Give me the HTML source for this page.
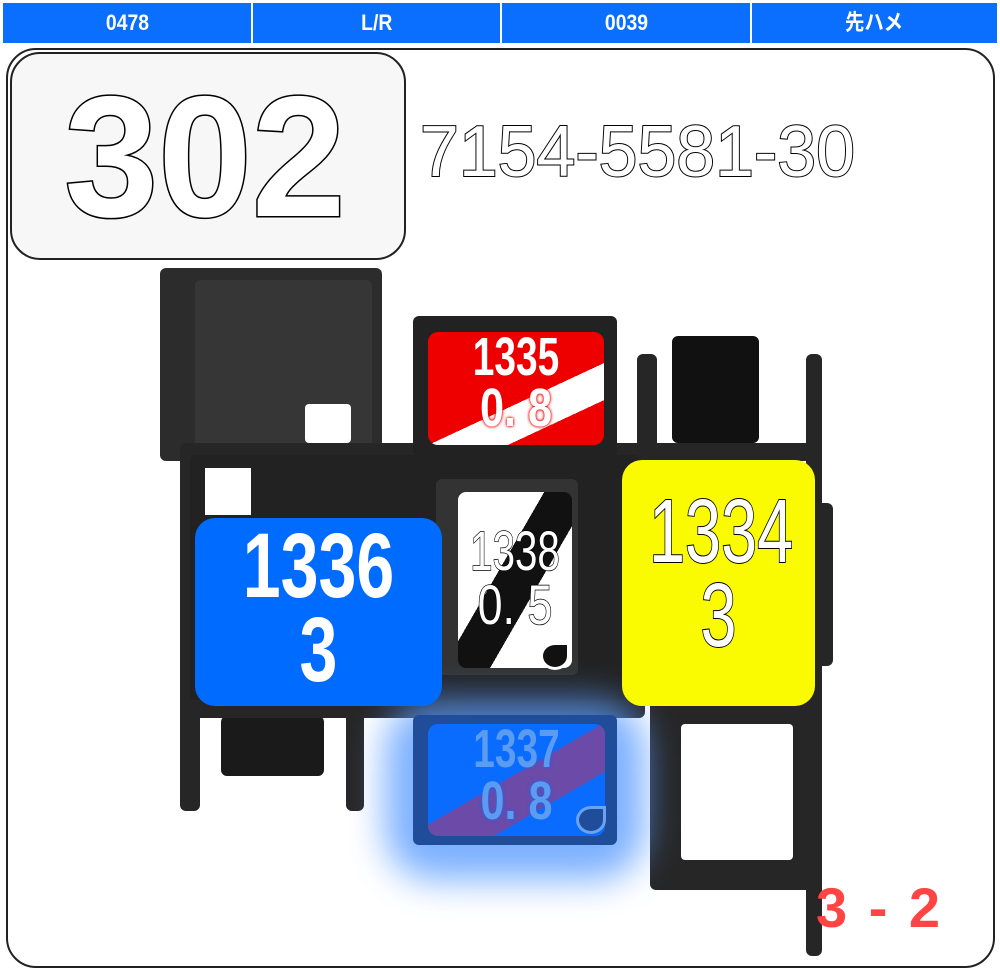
<!DOCTYPE html>
<html><head><meta charset="utf-8"><style>
*{margin:0;padding:0;box-sizing:border-box}
body{width:1000px;height:973px;background:#fff;position:relative;overflow:hidden;font-family:"Liberation Sans","Noto Sans CJK JP",sans-serif}
.a{position:absolute}
.hd{top:3px;height:40px;background:#0a6fff;color:#fff;font-weight:bold;font-size:22px;text-align:center;line-height:40px}
.hd span{display:inline-block;transform:scaleX(.88)}
.d{position:absolute;background:#262626;border-radius:6px}
.ol{color:#fff;-webkit-text-stroke:2px #000;paint-order:stroke fill}
.lab{position:absolute;text-align:center;line-height:1;white-space:nowrap}
.lab div{transform-origin:center}
</style></head><body>
<div class="a hd" style="left:3px;width:248px"><span>0478</span></div>
<div class="a hd" style="left:253px;width:247px"><span>L/R</span></div>
<div class="a hd" style="left:502px;width:248px"><span>0039</span></div>
<div class="a hd" style="left:752px;width:245px"><span>先ハメ</span></div>

<div class="a" style="left:6px;top:48px;width:989px;height:920px;border:2px solid #222;border-radius:30px"></div>
<div class="a" style="left:10px;top:52px;width:396px;height:208px;border:2px solid #222;border-radius:30px;background:#f7f7f7"></div>
<div class="a ol" style="left:20px;top:62px;width:370px;text-align:center;font-size:172px;font-weight:bold;line-height:190px;-webkit-text-stroke:3px #000;transform:scaleX(.98)">302</div>
<div class="a ol" style="left:420px;top:112px;font-size:72px;line-height:80px;transform:scaleX(.97);transform-origin:left">7154-5581-30</div>

<!-- dark housing -->
<div class="d" style="left:160px;top:268px;width:222px;height:193px;background:#2c2c2c"></div>
<div class="d" style="left:195px;top:280px;width:177px;height:173px;background:#363636"></div>
<div class="a" style="left:305px;top:404px;width:46px;height:39px;background:#fff;border-radius:4px"></div>
<div class="d" style="left:180px;top:455px;width:20px;height:356px"></div>
<div class="d" style="left:180px;top:443px;width:640px;height:18px"></div>
<div class="d" style="left:190px;top:455px;width:450px;height:255px;background:#222"></div>
<div class="a" style="left:205px;top:468px;width:46px;height:47px;background:#fff"></div>
<div class="d" style="left:346px;top:700px;width:18px;height:111px"></div>
<div class="d" style="left:221px;top:716px;width:103px;height:60px;background:#1a1a1a"></div>
<div class="d" style="left:185px;top:700px;width:460px;height:18px"></div>
<div class="d" style="left:413px;top:316px;width:204px;height:140px;background:#222"></div>
<div class="d" style="left:637px;top:354px;width:20px;height:102px"></div>
<div class="d" style="left:672px;top:336px;width:87px;height:107px;background:#111"></div>
<div class="d" style="left:806px;top:354px;width:16px;height:602px"></div>
<div class="d" style="left:815px;top:503px;width:18px;height:163px"></div>
<div class="d" style="left:650px;top:700px;width:172px;height:190px"></div>
<div class="a" style="left:681px;top:724px;width:112px;height:136px;background:#fff;border-radius:4px"></div>
<div class="d" style="left:436px;top:479px;width:142px;height:196px;background:#333"></div>

<!-- glow -->
<div class="a" style="left:385px;top:700px;width:260px;height:180px;background:#5a9cff;border-radius:50px;filter:blur(18px);opacity:.8"></div>
<div class="d" style="left:413px;top:715px;width:204px;height:130px;background:#1f4d9a"></div>

<!-- red -->
<div class="a" style="left:428px;top:332px;width:176px;height:113px;border-radius:10px;background:linear-gradient(155deg,#e00 58%,#fff 58%,#fff 77%,#e00 77%)"></div>
<div class="lab" style="left:428px;top:332px;width:176px;font-size:54px;font-weight:bold;color:#fff;text-shadow:0 0 4px #e00,0 0 3px #e00"><div style="transform:scaleX(.72);margin-top:-2px">1335</div><div style="transform:scaleX(.8);margin-top:-3px">0. 8</div></div>

<!-- white/black -->
<div class="a" style="left:458px;top:492px;width:114px;height:176px;border-radius:8px;background:linear-gradient(120deg,#fff 40%,#111 40%,#111 62%,#fff 62%)"></div>
<div class="lab ol" style="left:448px;top:523px;width:134px;font-size:56px;-webkit-text-stroke:1.5px #000"><div style="transform:scaleX(.72)">1338</div><div style="transform:scaleX(.8);margin-top:-2px">0. 5</div></div>
<div class="a" style="left:540px;top:642px;width:30px;height:28px;border:3px solid #fff;border-radius:50% 0 50% 50%;background:#111"></div>

<!-- blue 1336 -->
<div class="a" style="left:195px;top:518px;width:247px;height:188px;border-radius:20px;background:#006cff"></div>
<div class="lab" style="left:195px;top:524px;width:247px;font-size:92px;font-weight:bold;color:#fff;line-height:84px"><div style="transform:scaleX(.74)">1336</div><div style="transform:scaleX(.74)">3</div></div>

<!-- yellow -->
<div class="a" style="left:622px;top:460px;width:193px;height:246px;border-radius:20px;background:#fafa00"></div>
<div class="lab ol" style="left:622px;top:490px;width:193px;font-size:90px;line-height:84px"><div style="transform:scaleX(.72)">1334</div><div style="transform:scaleX(.72)">3</div></div>

<!-- blue 1337 -->
<div class="a" style="left:428px;top:724px;width:177px;height:112px;border-radius:10px;background:linear-gradient(150deg,#0a6cff 47%,#6b4aa8 47%,#6b4aa8 70%,#0a6cff 70%)"></div>
<div class="lab" style="left:428px;top:722px;width:177px;font-size:54px;font-weight:bold;color:#5b9cf0;text-shadow:0 0 4px #0a6cff"><div style="transform:scaleX(.72)">1337</div><div style="transform:scaleX(.8);margin-top:-2px">0. 8</div></div>
<div class="a" style="left:576px;top:806px;width:30px;height:28px;border:3px solid #6aa3f5;border-radius:50% 0 50% 50%;background:#1f4d9a"></div>

<div class="a" style="left:816px;top:874px;font-size:56px;font-weight:bold;color:#f44;line-height:68px;word-spacing:6px">3 - 2</div>
</body></html>
